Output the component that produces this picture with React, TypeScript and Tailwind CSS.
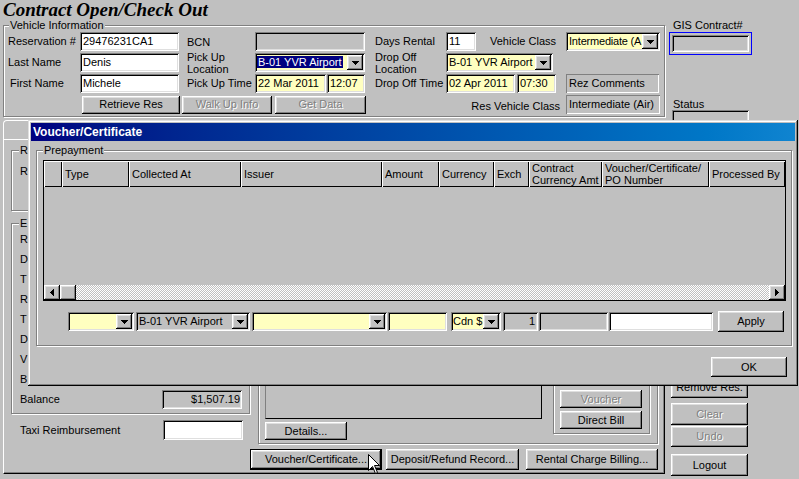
import React from "react";
import { twMerge } from "tailwind-merge";

// win9x bevels
const SUNKEN = "shadow-[inset_1px_1px_0_#808080,inset_-1px_-1px_0_#fff,inset_2px_2px_0_#000,inset_-2px_-2px_0_#dfdfdf]";
const RAISED = "shadow-[inset_-1px_-1px_0_#000,inset_1px_1px_0_#fff,inset_-2px_-2px_0_#808080,inset_2px_2px_0_#dfdfdf]";
const STATIC = "shadow-[inset_1px_1px_0_#808080,inset_-1px_-1px_0_#fff]";
const ETCHED = "border border-[#808080] shadow-[inset_1px_1px_0_#fff,1px_1px_0_#fff]";
const HEADER = "shadow-[inset_1px_1px_0_#fff,inset_-1px_-1px_0_#000]";
const DISABLED = "text-[#808080] [text-shadow:1px_1px_0_#fff]";
const YELLOW = "bg-[#ffffc0]";

type Kids = { className?: string; children?: React.ReactNode };

const Down = () => (
  <svg width="7" height="4" viewBox="0 0 7 4" shapeRendering="crispEdges">
    <path d="M0 0h7L3.5 4z" fill="#000" />
  </svg>
);
const Left = () => (
  <svg width="4" height="7" viewBox="0 0 4 7" shapeRendering="crispEdges">
    <path d="M4 0v7L0 3.5z" fill="#000" />
  </svg>
);
const Right = () => (
  <svg width="4" height="7" viewBox="0 0 4 7" shapeRendering="crispEdges">
    <path d="M0 0v7l4-3.5z" fill="#000" />
  </svg>
);

function Field({ className = "", children }: Kids) {
  return (
    <div className={twMerge(`flex h-[19px] shrink-0 items-center overflow-hidden whitespace-nowrap px-[3px] bg-white ${SUNKEN}`, className)}>
      {children}
    </div>
  );
}

function Box({ className = "", children }: Kids) {
  return (
    <div className={twMerge(`flex h-[19px] shrink-0 items-center overflow-hidden whitespace-nowrap px-[3px] ${STATIC}`, className)}>
      {children}
    </div>
  );
}

function Combo({ className = "", children }: Kids) {
  return (
    <div className={twMerge(`flex h-[19px] shrink-0 items-center py-[2px] pl-[3px] pr-[2px] ${YELLOW} ${SUNKEN}`, className)}>
      <div className="min-w-0 flex-1 overflow-hidden whitespace-nowrap">{children}</div>
      <div className={`flex h-[15px] w-[16px] shrink-0 items-center justify-center bg-[#c0c0c0] ${RAISED}`}>
        <Down />
      </div>
    </div>
  );
}

function Btn({ className = "", disabled, children }: Kids & { disabled?: boolean }) {
  return (
    <button
      type="button"
      className={twMerge(`flex shrink-0 items-center justify-center whitespace-nowrap bg-[#c0c0c0] leading-[13px] ${RAISED} ${disabled ? DISABLED : ""}`, className)}
    >
      {children}
    </button>
  );
}

function Group({ title, labelLeft = "left-[6px]", className = "", children }: Kids & { title?: string; labelLeft?: string }) {
  return (
    <div className={twMerge(`relative shrink-0 ${ETCHED}`, className)}>
      {title && (
        <span className={`absolute -top-[7px] ${labelLeft} bg-[#c0c0c0] px-[1px] leading-[13px]`}>{title}</span>
      )}
      {children}
    </div>
  );
}

function VehicleInfo() {
  return (
    <Group title="Vehicle Information" labelLeft="left-[5px]" className="mt-[10px] h-[92px] w-[662px] pl-[4px] pt-[6px]">
      <div className="flex w-[652px] flex-col gap-[2px]">
        <div className="flex h-[19px] items-center">
          <span className="w-[72px] shrink-0">Reservation #</span>
          <Field className="w-[99px]">29476231CA1</Field>
          <span className="ml-[8px] w-[68px] shrink-0 pt-[2px]">BCN</span>
          <Field className="w-[110px] bg-[#c0c0c0]" />
          <span className="ml-[10px] w-[71px] shrink-0">Days Rental</span>
          <Field className="w-[30px]">11</Field>
          <span className="ml-[14px] w-[76px] shrink-0">Vehicle Class</span>
          <Combo className="w-[94px]">
            <span className="tracking-[-0.2px]">Intermediate (A</span>
          </Combo>
        </div>

        <div className="flex h-[19px] items-center">
          <span className="w-[72px] shrink-0">Last Name</span>
          <Field className="w-[99px]">Denis</Field>
          <span className="ml-[8px] w-[68px] shrink-0 leading-[12px]">
            Pick Up
            <br />
            Location
          </span>
          <Combo className="w-[110px] pl-[2px]">
            <span className="bg-[#000080] px-[1px] text-white">B-01 YVR Airport</span>
          </Combo>
          <span className="ml-[10px] w-[71px] shrink-0 leading-[12px]">
            Drop Off
            <br />
            Location
          </span>
          <Combo className="w-[107px]">B-01 YVR Airport</Combo>
        </div>

        <div className="flex h-[19px] items-center">
          <span className="w-[72px] shrink-0 pl-[2px]">First Name</span>
          <Field className="w-[99px]">Michele</Field>
          <span className="ml-[8px] w-[68px] shrink-0 whitespace-nowrap">Pick Up Time</span>
          <Field className={`w-[71px] ${YELLOW}`}>22 Mar 2011</Field>
          <Field className={`ml-[1px] w-[38px] ${YELLOW}`}>12:07</Field>
          <span className="ml-[10px] w-[71px] shrink-0 whitespace-nowrap">Drop Off Time</span>
          <Field className={`w-[69px] ${YELLOW}`}>02 Apr 2011</Field>
          <Field className={`ml-[2px] w-[39px] ${YELLOW}`}>07:30</Field>
          <Box className="ml-[10px] w-[93px]">Rez Comments</Box>
        </div>

        <div className="flex h-[19px] items-center">
          <Btn className="ml-[74px] h-[18px] w-[98px]">Retrieve Res</Btn>
          <Btn disabled className="ml-[2px] h-[18px] w-[90px]">
            Walk Up Info
          </Btn>
          <Btn disabled className="ml-[3px] h-[18px] w-[91px]">
            Get Data
          </Btn>
          <span className="flex-1 whitespace-nowrap pr-[6px] pt-[3px] text-right">Res Vehicle Class</span>
          <Box className="w-[94px]">Intermediate (Air)</Box>
        </div>
      </div>
    </Group>
  );
}

function TabArea() {
  const letters = ["R", "D", "T", "R", "T", "D", "V", "B"];
  return (
    <div className="mt-[3px]">
      <div className="h-[19px] w-[110px] rounded-tl-[4px] border-l border-r border-t border-l-white border-r-black border-t-white" />
      <div className="flex h-[335px] w-[662px] flex-col border border-b-black border-l-white border-r-black border-t-white pl-[7px] pt-[10px] shadow-[inset_-1px_-1px_0_#808080]">
        <div className="flex">
          <div className="w-[239px] shrink-0">
            <Group title="R" labelLeft="left-[7px]" className="h-[61px] pl-[8px] pt-[10px]">
              <div className="flex h-[20px] items-center">R</div>
            </Group>
            <Group title="E" labelLeft="left-[7px]" className="mt-[12px] h-[191px] pl-[8px] pt-[5px]">
              {letters.map((l, i) => (
                <div key={i} className="flex h-[20px] items-center">
                  {l}
                </div>
              ))}
              <div className="flex h-[20px] items-center">
                <span className="w-[142px] shrink-0">Balance</span>
                <Field className="w-[80px] justify-end bg-[#c0c0c0] pr-[2px]">$1,507.19</Field>
              </div>
            </Group>
            <div className="mt-[6px] flex h-[20px] items-center pl-[9px]">
              <span className="w-[143px] shrink-0">Taxi Reimbursement</span>
              <Field className="h-[20px] w-[80px]" />
            </div>
          </div>

          <Group className="ml-[8px] flex h-[294px] w-[400px] pl-[6px] pt-[10px]">
            <div className="flex w-[277px] shrink-0 flex-col items-start">
              <div className="h-[258px] w-full border border-b-black border-l-[#808080] border-r-black border-t-[#808080]" />
              <Btn className="mt-[3px] h-[18px] w-[82px]">Details...</Btn>
            </div>
            <Group className="ml-[11px] flex h-[273px] w-[97px] flex-col justify-end pb-[4px] pl-[6px]">
              <Btn disabled className="h-[18px] w-[82px]">
                Voucher
              </Btn>
              <Btn className="mt-[3px] h-[18px] w-[82px]">Direct Bill</Btn>
            </Group>
          </Group>
        </div>

        <div className="ml-[239px] mt-[5px] flex">
          <div className="border border-black">
            <Btn className="h-[19px] w-[130px]">Voucher/Certificate...</Btn>
          </div>
          <Btn className="ml-[4px] h-[21px] w-[133px]">Deposit/Refund Record...</Btn>
          <Btn className="ml-[7px] h-[21px] w-[132px]">Rental Charge Billing...</Btn>
        </div>
      </div>
    </div>
  );
}

function RightColumn() {
  return (
    <div className="ml-[4px] flex w-[84px] shrink-0 flex-col pt-[19px]">
      <span className="h-[13px] whitespace-nowrap pl-[4px]">GIS Contract#</span>
      <div className="h-[23px] w-[83px] border border-[#0000ff] p-[2px]">
        <div className={`h-full w-full bg-[#c0c0c0] ${SUNKEN}`} />
      </div>
      <span className="mt-[43px] h-[12px] pl-[4px] leading-[12px]">Status</span>
      <div className={`ml-[3px] h-[22px] w-[77px] ${SUNKEN}`} />
      <Btn className="ml-[2px] mt-[244px] h-[22px] w-[77px]">Remove Res.</Btn>
      <Btn disabled className="ml-[2px] mt-[5px] h-[22px] w-[77px]">
        Clear
      </Btn>
      <Btn disabled className="ml-[2px] mt-[1px] h-[21px] w-[77px]">
        Undo
      </Btn>
      <Btn className="ml-[2px] mt-[7px] h-[22px] w-[77px]">Logout</Btn>
    </div>
  );
}

const columns: { w: string; label: React.ReactNode }[] = [
  { w: "w-[18px]", label: "" },
  { w: "w-[67px]", label: "Type" },
  { w: "w-[112px]", label: "Collected At" },
  { w: "w-[141px]", label: "Issuer" },
  { w: "w-[57px]", label: "Amount" },
  { w: "w-[55px]", label: "Currency" },
  { w: "w-[35px]", label: "Exch" },
  { w: "w-[73px]", label: <>Contract<br />Currency Amt</> },
  { w: "w-[107px]", label: <>Voucher/Certificate/<br />PO Number</> },
  { w: "w-[76px]", label: "Processed By" },
];

function VoucherDialog() {
  return (
    <div className="absolute left-[28px] top-[120px] flex h-[266px] w-[770px] flex-col bg-[#c0c0c0] p-[3px] shadow-[inset_-1px_-1px_0_#000,inset_1px_1px_0_#dfdfdf,inset_-2px_-2px_0_#808080,inset_2px_2px_0_#fff]">
      <div className="flex h-[18px] shrink-0 items-center bg-linear-to-r from-[#000080] to-[#1084d0] pl-[2px] text-[12px] font-bold text-white">
        Voucher/Certificate
      </div>

      <Group title="Prepayment" className="ml-[5px] mt-[9px] h-[196px] w-[756px] pl-[6px] pt-[9px]">
        <div className="flex h-[141px] w-[743px] flex-col border border-black">
          <div className="flex h-[26px] shrink-0">
            {columns.map((c, i) => (
              <div key={i} className={`flex h-full shrink-0 items-center whitespace-nowrap pl-[3px] leading-[12px] ${HEADER} ${c.w}`}>
                {c.label}
              </div>
            ))}
          </div>
          <div className="flex-1" />
          <div className="flex h-[15px] shrink-0">
            <div className={`flex w-[16px] items-center justify-center ${RAISED}`}>
              <Left />
            </div>
            <div className={`w-[16px] ${RAISED}`} />
            <div className="flex-1 bg-[repeating-conic-gradient(#fff_0_25%,#c0c0c0_0_50%)] bg-[length:2px_2px]" />
            <div className={`flex w-[16px] items-center justify-center ${RAISED}`}>
              <Right />
            </div>
          </div>
        </div>

        <div className="mt-[11px] flex h-[19px] items-center">
          <Combo className="ml-[25px] w-[66px]" />
          <Combo className="ml-[2px] w-[114px] bg-[#c0c0c0]">B-01 YVR Airport</Combo>
          <Combo className="ml-[2px] w-[135px]" />
          <Field className={`ml-[1px] w-[59px] ${YELLOW}`} />
          <Combo className="ml-[4px] w-[50px] pl-[2px]">Cdn $</Combo>
          <Field className="ml-[2px] w-[35px] justify-end bg-[#c0c0c0]">1</Field>
          <Field className="ml-[1px] w-[69px] bg-[#c0c0c0]" />
          <Field className="ml-[1px] w-[104px]" />
          <Btn className="ml-[5px] h-[21px] w-[66px]">Apply</Btn>
        </div>
      </Group>

      <Btn className="ml-auto mr-[8px] mt-[11px] h-[20px] w-[76px]">OK</Btn>
    </div>
  );
}

function Cursor() {
  return (
    <svg className="absolute left-[368px] top-[454px]" width="13" height="21" viewBox="0 0 13 21">
      <path
        d="M0.5 0.5V16.5L4.5 12.5L7.5 19.5L9.5 18.5L6.5 11.5H11.5Z"
        fill="#fff"
        stroke="#000"
        strokeWidth="1"
        strokeLinejoin="miter"
      />
    </svg>
  );
}

export default function App() {
  return (
    <div className="relative h-[479px] w-[799px] select-none overflow-hidden bg-[#c0c0c0] font-['Liberation_Sans',Arial,sans-serif] text-[11px] leading-[13px] text-black">
      <div className="flex">
        <div className="w-[665px] shrink-0 pl-[3px]">
          <h1 className="h-[15px] whitespace-nowrap font-['Liberation_Serif','Times_New_Roman',serif] text-[19px] font-bold italic leading-[19px]">
            Contract Open/Check Out
          </h1>
          <VehicleInfo />
          <TabArea />
        </div>
        <RightColumn />
      </div>
      <VoucherDialog />
      <Cursor />
    </div>
  );
}
